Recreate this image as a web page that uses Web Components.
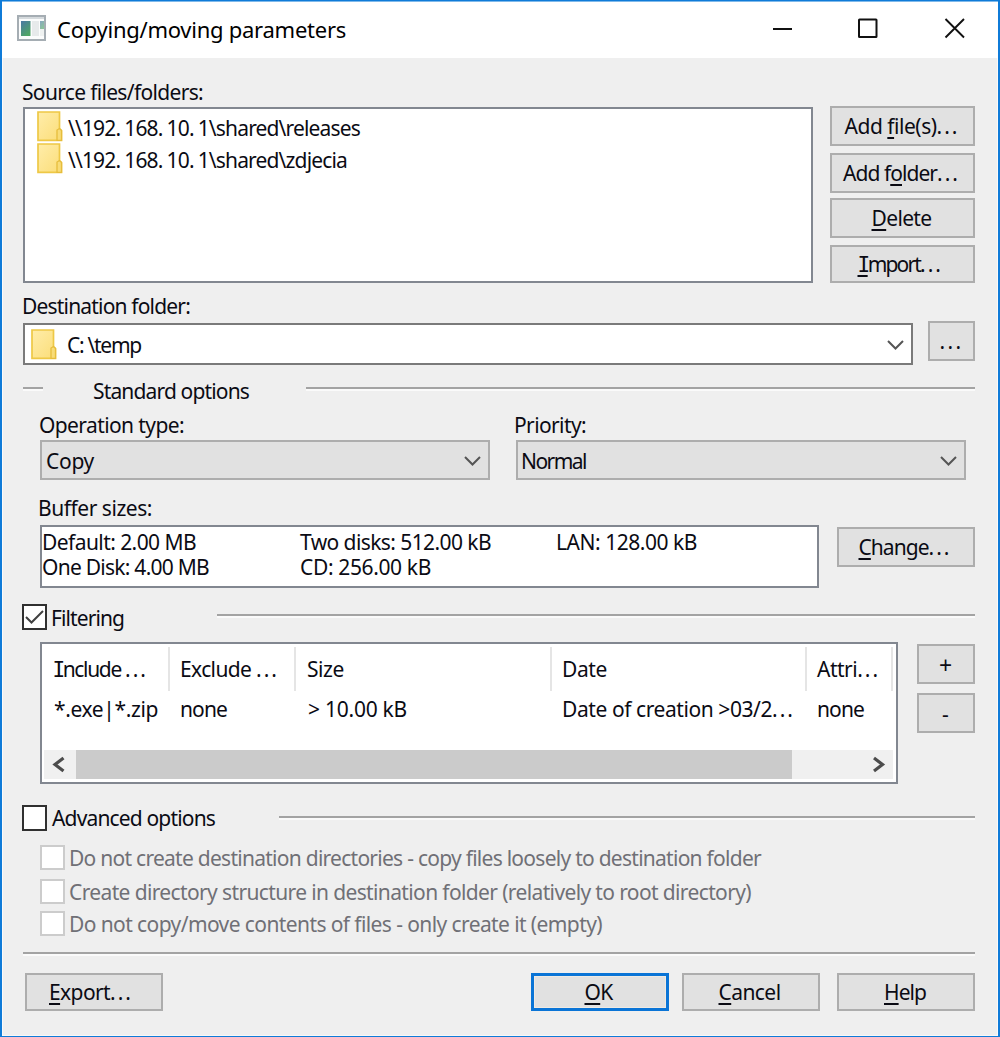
<!DOCTYPE html>
<html lang="en">
<head>
<meta charset="utf-8">
<title>Copying/moving parameters</title>
<style>
  html, body { margin: 0; height: 100%; overflow: hidden; background: #efefef; }
  body { font: 21px "Noto Sans", "Open Sans", sans-serif; color: #0b0b14; }
</style>
</head>
<body>
<app-window>
  <title-bar slot="title"><ui-label fit="289" style="--size:22px">Copying/moving parameters</ui-label></title-bar>

  <ui-label style="margin:20px 0 0 20px" fit="181">Source files/folders:</ui-label>
  <ui-row style="height:177px;padding:0 23px 0 21px;justify-content:space-between">
    <source-list style="margin-top:1px">
      <source-item fit="292">\\192<i>.</i>168<i>.</i>10<i>.</i>1\shared\releases</source-item>
      <source-item fit="279">\\192<i>.</i>168<i>.</i>10<i>.</i>1\shared\zdjecia</source-item>
    </source-list>
    <ui-stack>
      <ui-button w="145" h="40"><ui-label fit="115" style="padding-right:1px">Add <u>f</u>ile(s)<s>...</s></ui-label></ui-button>
      <ui-button w="145" h="40" style="margin-top:7px"><ui-label fit="117" style="padding-right:2px">Add f<u>o</u>lder<s>...</s></ui-label></ui-button>
      <ui-button w="145" h="40" style="margin-top:5px"><ui-label fit="60" style="padding-right:2px"><u>D</u>elete</ui-label></ui-button>
      <ui-button w="145" h="38" style="margin-top:7px"><ui-label fit="84" style="padding-right:3px"><u class="i">I</u>mport<s>...</s></ui-label></ui-button>
    </ui-stack>
  </ui-row>

  <ui-label style="margin:9px 0 0 20px" fit="168">Destination folder:</ui-label>
  <ui-row style="height:43px;margin-top:1px;padding:0 23px 0 21px;justify-content:space-between">
    <ui-combo editable w="890" h="42" style="margin-top:2px"><folder-icon style="margin:0 10px 0 6px"></folder-icon><ui-label fit="74" style="padding-top:2px">C<i>:</i>\temp</ui-label></ui-combo>
    <ui-button w="47" h="40"><ui-label fit="24">...</ui-label></ui-button>
  </ui-row>

  <ui-row style="height:28px;margin-top:13px;padding:0 23px 0 21px">
    <ui-rule style="flex:0 0 20px;margin-top:10px"></ui-rule>
    <ui-label fit="156" style="margin-left:50px">Standard options</ui-label>
    <ui-rule style="margin:10px 0 0 57px"></ui-rule>
  </ui-row>

  <ui-row style="height:28px;margin-top:6px;padding-left:37px">
    <ui-label fit="145" style="flex:0 0 475px">Operation type:</ui-label><ui-label fit="72">Priority:</ui-label>
  </ui-row>
  <ui-row style="height:40px;margin-top:1px;padding-left:38px;gap:26px">
    <ui-combo w="450" h="40"><ui-label fit="48" style="margin-left:4px;padding-top:2px">Copy</ui-label></ui-combo>
    <ui-combo w="450" h="40"><ui-label fit="65" style="margin-left:3px;padding-top:2px">Normal</ui-label></ui-combo>
  </ui-row>

  <ui-label style="margin:14px 0 0 36px" fit="114">Buffer sizes:</ui-label>
  <ui-row style="height:63px;margin-top:3px;padding:0 23px 0 38px;justify-content:space-between">
    <buffer-panel>
      <ui-label fit="154">Default: 2.00 MB</ui-label><ui-label fit="191">Two disks: 512.00 kB</ui-label><ui-label fit="141">LAN: 128.00 kB</ui-label>
      <ui-label fit="167">One Disk: 4.00 MB</ui-label><ui-label fit="131">CD: 256.00 kB</ui-label>
    </buffer-panel>
    <ui-button w="138" h="40" style="margin-top:2px"><ui-label fit="93" style="padding-right:2px"><u>C</u>hange<s>...</s></ui-label></ui-button>
  </ui-row>

  <ui-row style="height:28px;margin-top:16px;padding:0 23px 0 20px">
    <ui-check checked><ui-label fit="73">Filtering</ui-label></ui-check>
    <ui-rule style="margin:10px 0 0 93px"></ui-rule>
  </ui-row>
  <ui-row style="height:142px;margin-top:10px;padding:0 23px 0 38px;justify-content:space-between">
    <filter-table></filter-table>
    <ui-stack style="margin-top:2px;gap:9px">
      <ui-button w="58" h="40"><ui-label fit="14" style="padding-top:2px;--size:23px">+</ui-label></ui-button>
      <ui-button w="58" h="40"><ui-label fit="8" style="padding-top:2px">-</ui-label></ui-button>
    </ui-stack>
  </ui-row>

  <ui-row style="height:28px;margin-top:20px;padding:0 23px 0 20px">
    <ui-check style="--box-top:1px"><ui-label fit="163" style="margin-left:1px">Advanced options</ui-label></ui-check>
    <ui-rule style="margin:12px 0 0 64px"></ui-rule>
  </ui-row>
  <ui-check disabled style="margin:12px 0 0 37px"><ui-label fit="692">Do not create destination directories - copy files loosely to destination folder</ui-label></ui-check>
  <ui-check disabled style="margin:6px 0 0 37px"><ui-label fit="682">Create directory structure in destination folder (relatively to root directory)</ui-label></ui-check>
  <ui-check disabled style="margin:4px 0 0 37px"><ui-label fit="533">Do not copy/move contents of files - only create it (empty)</ui-label></ui-check>

  <ui-row style="margin-top:14px;padding:0 23px 0 21px"><ui-rule></ui-rule></ui-row>
  <ui-row style="height:38px;margin-top:17px;padding:0 23px 0 23px">
    <ui-button w="138" h="38" style="margin-right:auto"><ui-label fit="84" style="padding-right:6px"><u>E</u>xport<s>...</s></ui-label></ui-button>
    <ui-button primary w="138" h="38"><ui-label fit="28" style="padding-right:3px"><u>O</u>K</ui-label></ui-button>
    <ui-button w="138" h="38" style="margin-left:13px"><ui-label fit="62" style="padding-right:3px"><u>C</u>ancel</ui-label></ui-button>
    <ui-button w="138" h="38" style="margin-left:17px"><ui-label fit="42" style="padding-right:2px"><u>H</u>elp</ui-label></ui-button>
  </ui-row>
</app-window>

<script>
function define(name, html, setup) {
  customElements.define(name, class extends HTMLElement {
    constructor() {
      super();
      const t = document.createElement('template');
      t.innerHTML = html;
      this.attachShadow({ mode: 'open' }).appendChild(t.content.cloneNode(true));
    }
    connectedCallback() { if (setup) setup(this, this.shadowRoot); }
  });
}
const size = (el) => {
  el.style.setProperty('--w', el.getAttribute('w') + 'px');
  el.style.setProperty('--h', el.getAttribute('h') + 'px');
};

define('app-window', `<style>
  :host{display:flex;flex-direction:column;box-sizing:border-box;width:1000px;height:1037px;background:#efefef;
    border:solid #0f7bd8;border-width:1px 2px 1px 2px;box-shadow:inset 0 1px #7fb9ea,inset 1px 0 #fafafa,inset -1px 0 #fafafa,inset 0 -1px #f8f8f8;padding-bottom:1px}
  </style><slot name="title"></slot><slot></slot>`);

define('title-bar', `<style>
  :host{display:flex;align-items:center;height:56px;margin-top:1px;padding-left:15px;background:#fff;color:#000}
  svg{flex:none} .app{margin:-5px 11px 0 0} .controls{display:block;margin-left:auto;margin-top:-1px}
  ::slotted(*){margin-top:-3px}
  </style>
  <svg class="app" width="29" height="26" viewBox="0 0 29 26">
    <defs><linearGradient id="g" x1="0" y1="0" x2=".6" y2="1"><stop offset="0" stop-color="#4b78a4"/><stop offset="1" stop-color="#4fa565"/></linearGradient></defs>
    <rect x="1" y="1" width="27" height="24" fill="#fbfcfc" stroke="#a5adb3" stroke-width="2"/>
    <path d="M2 3h25" stroke="#d5dadd" stroke-width="2"/>
    <rect x="4" y="6" width="9.500" height="15" fill="url(#g)"/>
    <rect x="15" y="6" width="7" height="15" fill="#e7eaeb"/>
    <rect x="23" y="6" width="4" height="8" fill="url(#g)" opacity=".65"/>
    <rect x="23" y="14" width="4" height="7" fill="#eff2f1"/>
  </svg><slot></slot>
  <svg class="controls" width="226" height="56" viewBox="772 2 226 56" fill="none" stroke="#111" stroke-width="2">
    <path d="M773 29h19"/><rect x="859" y="19.500" width="17.500" height="17.500" rx=".5"/><path d="M945.500 19l18.500 18.500M964 19l-18.500 18.500" stroke-width="1.900"/></svg>`);

define('ui-row', `<style>:host{display:flex;align-items:flex-start;flex:none}</style><slot></slot>`);
define('ui-stack', `<style>:host{display:flex;flex-direction:column}</style><slot></slot>`);

define('ui-rule', `<style>:host{display:block;flex:1;height:2px;background:#a3a3a3;border-bottom:2px solid #fafafa}</style>`);

define('ui-button', `<style>
  :host{display:flex;align-items:center;justify-content:center;box-sizing:border-box;flex:none;width:var(--w);height:var(--h);background:#e1e1e1;border:2px solid #adadad}
  :host([primary]){border:3px solid #0a74d6;box-shadow:inset 0 0 0 1px #eeeae4}
  </style><slot></slot>`, size);

define('folder-icon', `<style>:host{display:block;flex:none;width:26px;height:31px}svg{display:block}</style>
  <svg width="26" height="31" viewBox="0 0 26 31">
    <defs><linearGradient id="f" x1="0" y1="0" x2="1" y2="1"><stop offset="0" stop-color="#ffedaa"/><stop offset="1" stop-color="#fbdd78"/></linearGradient></defs>
    <path d="M1 1h21.500v16.500l2 2v9.800H1z" fill="url(#f)" stroke="#eec846" stroke-width="1.700"/>
    <path d="M20 29.300V19l2.500-1.500 2 2v9.800z" fill="#f8dc78" stroke="#e6bd3c" stroke-width="1.300"/>
  </svg>`);

define('source-list', `<style>
  :host{display:block;box-sizing:border-box;width:790px;height:176px;background:#fff;border:2px solid #828790;padding:2px 0 0 12px}
  </style><slot></slot>`);

define('source-item', `<style>:host{display:flex;height:32px}ui-label{margin:3px 0 0 5px}</style>
  <folder-icon></folder-icon><ui-label></ui-label>`, (el, r) => {
  const l = r.querySelector('ui-label');
  l.setAttribute('fit', el.getAttribute('fit'));
  l.innerHTML = el.innerHTML;
  if (l.refit) l.refit();
});

define('ui-combo', `<style>
  :host{display:flex;align-items:center;box-sizing:border-box;flex:none;width:var(--w);height:var(--h);background:#e1e1e1;border:2px solid #adadad}
  :host([editable]){background:#fff;border-color:#7a7a7a}
  svg{margin:2px 7px 0 auto;flex:none}
  </style><slot></slot><svg width="17" height="12" viewBox="0 0 17 12" fill="none" stroke="#555" stroke-width="2"><path d="M1 2l7.500 7.500L16 2"/></svg>`, size);

define('ui-check', `<style>
  :host{display:flex;height:28px;flex:none}
  .box{box-sizing:border-box;width:25px;height:26px;margin:var(--box-top,0) 4px 0 0;background:#fff;border:2px solid #303030;flex:none}
  :host([disabled]){color:#707076}
  :host([disabled]) .box{border-color:#cccccc;margin:1px 4px 0 1px;height:25px}
  svg{display:none} :host([checked]) svg{display:block}
  </style><div class="box"><svg width="21" height="22" viewBox="0 0 21 22" fill="none" stroke="#404040" stroke-width="2"><path d="M2 11l5.500 5.500L19 5"/></svg></div><slot></slot>`);

define('buffer-panel', `<style>
  :host{display:grid;grid-template-columns:258px 256px 1fr;grid-auto-rows:25px;align-items:center;align-content:start;box-sizing:border-box;width:779px;height:63px;
    background:#fff;border:2px solid #828790;padding:3px 0 0 0;--line:25px}
  </style><slot></slot>`);

define('filter-table', `<style>
  :host{display:flex;flex-direction:column;box-sizing:border-box;width:858px;height:142px;background:#fff;border:2px solid #828790;padding:3px 3px 3px 2px}
  .r{display:grid;grid-template-columns:126px 126px 256px 255px 86px}
  .h{height:44px;align-items:stretch} .h>div{display:flex;align-items:center;border-right:2px solid #e5e5e5;padding-left:10px}
  .d{height:30px;align-items:center;padding-top:3px;margin-bottom:auto}.d>div{padding-left:10px}
  .s{display:flex;justify-content:space-between;height:29px;background:#f0f0f0}
  .t{width:716px;background:#cbcbcb}.s svg{display:block}
  </style>
  <div class="r h"><div><ui-label fit="94"><b class="i">I</b>nclude <s>...</s></ui-label></div><div><ui-label fit="99">Exclude <s>...</s></ui-label></div><div><ui-label fit="37" style="margin-left:1px">Size</ui-label></div><div><ui-label fit="45">Date</ui-label></div><div><ui-label fit="63">Attri<s>...</s></ui-label></div></div>
  <div class="r d"><div><ui-label fit="104">*.exe|*.zip</ui-label></div><div><ui-label fit="47">none</ui-label></div><div><ui-label fit="99" style="margin-left:2px">&gt; 10.00 kB</ui-label></div><div><ui-label fit="233">Date of creation &gt;03/2<s>...</s></ui-label></div><div><ui-label fit="47">none</ui-label></div></div>
  <div class="s"><svg width="32" height="29" fill="none" stroke="#4c4c4c" stroke-width="3.200"><path d="M19.500 8L11 14.500l8.500 6.500"/></svg><div class="t"></div><div style="width:70px"></div><svg width="31" height="29" fill="none" stroke="#4c4c4c" stroke-width="3.200"><path d="M12 8l8.500 6.500L12 21"/></svg></div>`);

/* Text label: tracking is adjusted so the text takes the advance width given in "fit".
   <u> marks the accelerator, <i> widens the gap after punctuation, <s> is a wide ellipsis. */
customElements.define('ui-label', class extends HTMLElement {
  constructor() {
    super();
    this.attachShadow({ mode: 'open' }).innerHTML = `<style>
      :host{display:block;flex:none;height:var(--line,28px);line-height:var(--line,28px);white-space:pre;font-size:var(--size,inherit)}
      span{display:inline-block;font-variant-ligatures:none}
      ::slotted(u){text-decoration-thickness:2px;text-underline-offset:3px;text-decoration-skip-ink:none}
      ::slotted(i){font-style:normal;margin-right:4px}
      ::slotted(s){text-decoration:none;letter-spacing:2px}
      ::slotted(.i){font-family:"DejaVu Sans Mono",monospace;font-weight:400;line-height:0;letter-spacing:-2.500px;margin-left:-1.500px}
      </style><span><slot></slot></span>`;
  }
  connectedCallback() { this.refit(); }
  refit() {
    const s = this.shadowRoot.querySelector('span'), fit = +this.getAttribute('fit');
    if (!fit || !this.textContent) return;
    s.style.letterSpacing = '0px';
    const w = s.getBoundingClientRect().width;
    const fixed = [...this.querySelectorAll('s,.i')].reduce((n, e) => n + e.textContent.length, 0);
    s.style.letterSpacing = ((fit - w) / (this.textContent.length - fixed)).toFixed(3) + 'px';
  }
});
</script>
</body>
</html>
